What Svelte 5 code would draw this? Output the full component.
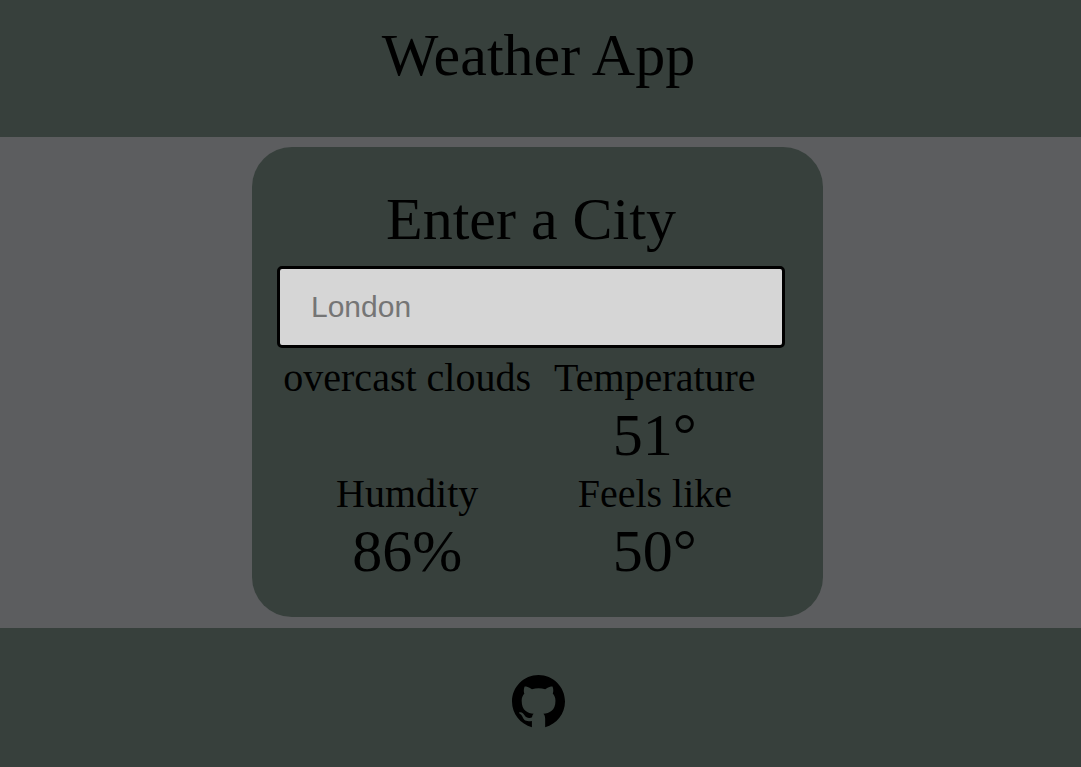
<script>
  let city = $state('');

  const readings = [
    { label: 'overcast clouds', value: '' },
    { label: 'Temperature', value: '51°' },
    { label: 'Humdity', value: '86%' },
    { label: 'Feels like', value: '50°' }
  ];
</script>

<div class="page">
  <header>
    <h1>Weather App</h1>
  </header>

  <main>
    <section class="card">
      <label for="city">Enter a City</label>
      <input id="city" type="text" placeholder="London" bind:value={city} />
      <div class="readings">
        {#each readings as reading}
          <div class="reading">
            <p class="name">{reading.label}</p>
            {#if reading.value}
              <p class="value">{reading.value}</p>
            {/if}
          </div>
        {/each}
      </div>
    </section>
  </main>

  <footer>
    <a href="https://github.com" aria-label="GitHub">
      <svg viewBox="0 0 16 16" width="53" height="53" aria-hidden="true">
        <path d="M8 0C3.58 0 0 3.58 0 8c0 3.7 2.5 6.8 6.02 7.76 0-.19-.01-1.21-.01-1.88-2.01.37-2.53-.49-2.69-.94-.09-.23-.48-.94-.82-1.13-.28-.15-.68-.52-.01-.53.63-.01 1.08.58 1.23.82.72 1.21 1.87.87 2.33.66.07-.52.28-.87.51-1.07-1.78-.2-3.64-.89-3.64-3.95 0-.87.31-1.59.82-2.15-.08-.2-.36-1.02.08-2.12 0 0 .67-.21 2.2.82.64-.18 1.32-.27 2-.27s1.36.09 2 .27c1.53-1.04 2.2-.82 2.2-.82.44 1.1.16 1.92.08 2.12.51.56.82 1.27.82 2.15 0 3.07-1.87 3.75-3.65 3.95.29.25.54.73.54 1.48v2.57C13.5 14.8 16 11.7 16 8c0-4.42-3.58-8-8-8z" />
      </svg>
    </a>
  </footer>
</div>

<style>
  :global(body) {
    margin: 0;
    background: #5c5d5f;
  }

  .page {
    display: flex;
    flex-direction: column;
    min-height: 100vh;
    color: #000;
    font-family: "Liberation Serif", "Times New Roman", serif;
  }

  header,
  footer {
    box-sizing: border-box;
    background: #37403c;
    text-align: center;
  }

  header {
    padding: 22px 4px 49px 0;
  }

  h1,
  label {
    margin: 0;
    font-size: 60px;
    font-weight: 400;
    line-height: 66px;
  }

  main {
    display: flex;
    justify-content: center;
    padding: 10px 6px 11px 0;
  }

  .card {
    box-sizing: border-box;
    display: flex;
    flex-direction: column;
    width: 100%;
    max-width: 571px;
    padding: 39px 38px 32px 25px;
    border-radius: 40px;
    background: #37403c;
    text-align: center;
  }

  input {
    box-sizing: border-box;
    width: 100%;
    height: 82px;
    margin: 14px 0 7px;
    padding: 0 31px;
    border: 3px solid #000;
    border-radius: 5px;
    background: #d6d6d6;
    color: #000;
    font: 30px "Liberation Sans", Arial, sans-serif;
  }

  input::placeholder {
    color: #757575;
  }

  .readings {
    display: grid;
    grid-template-columns: 1fr 1fr;
    row-gap: 2px;
    align-self: center;
  }

  p {
    margin: 0;
  }

  .name {
    font-size: 40px;
    line-height: 46px;
  }

  .value {
    font-size: 60px;
    line-height: 68px;
  }

  footer {
    flex: 1;
    padding: 47px 4px 36px 0;
  }

  a {
    display: inline-block;
    color: #000;
  }

  svg {
    display: block;
    fill: currentColor;
  }
</style>
